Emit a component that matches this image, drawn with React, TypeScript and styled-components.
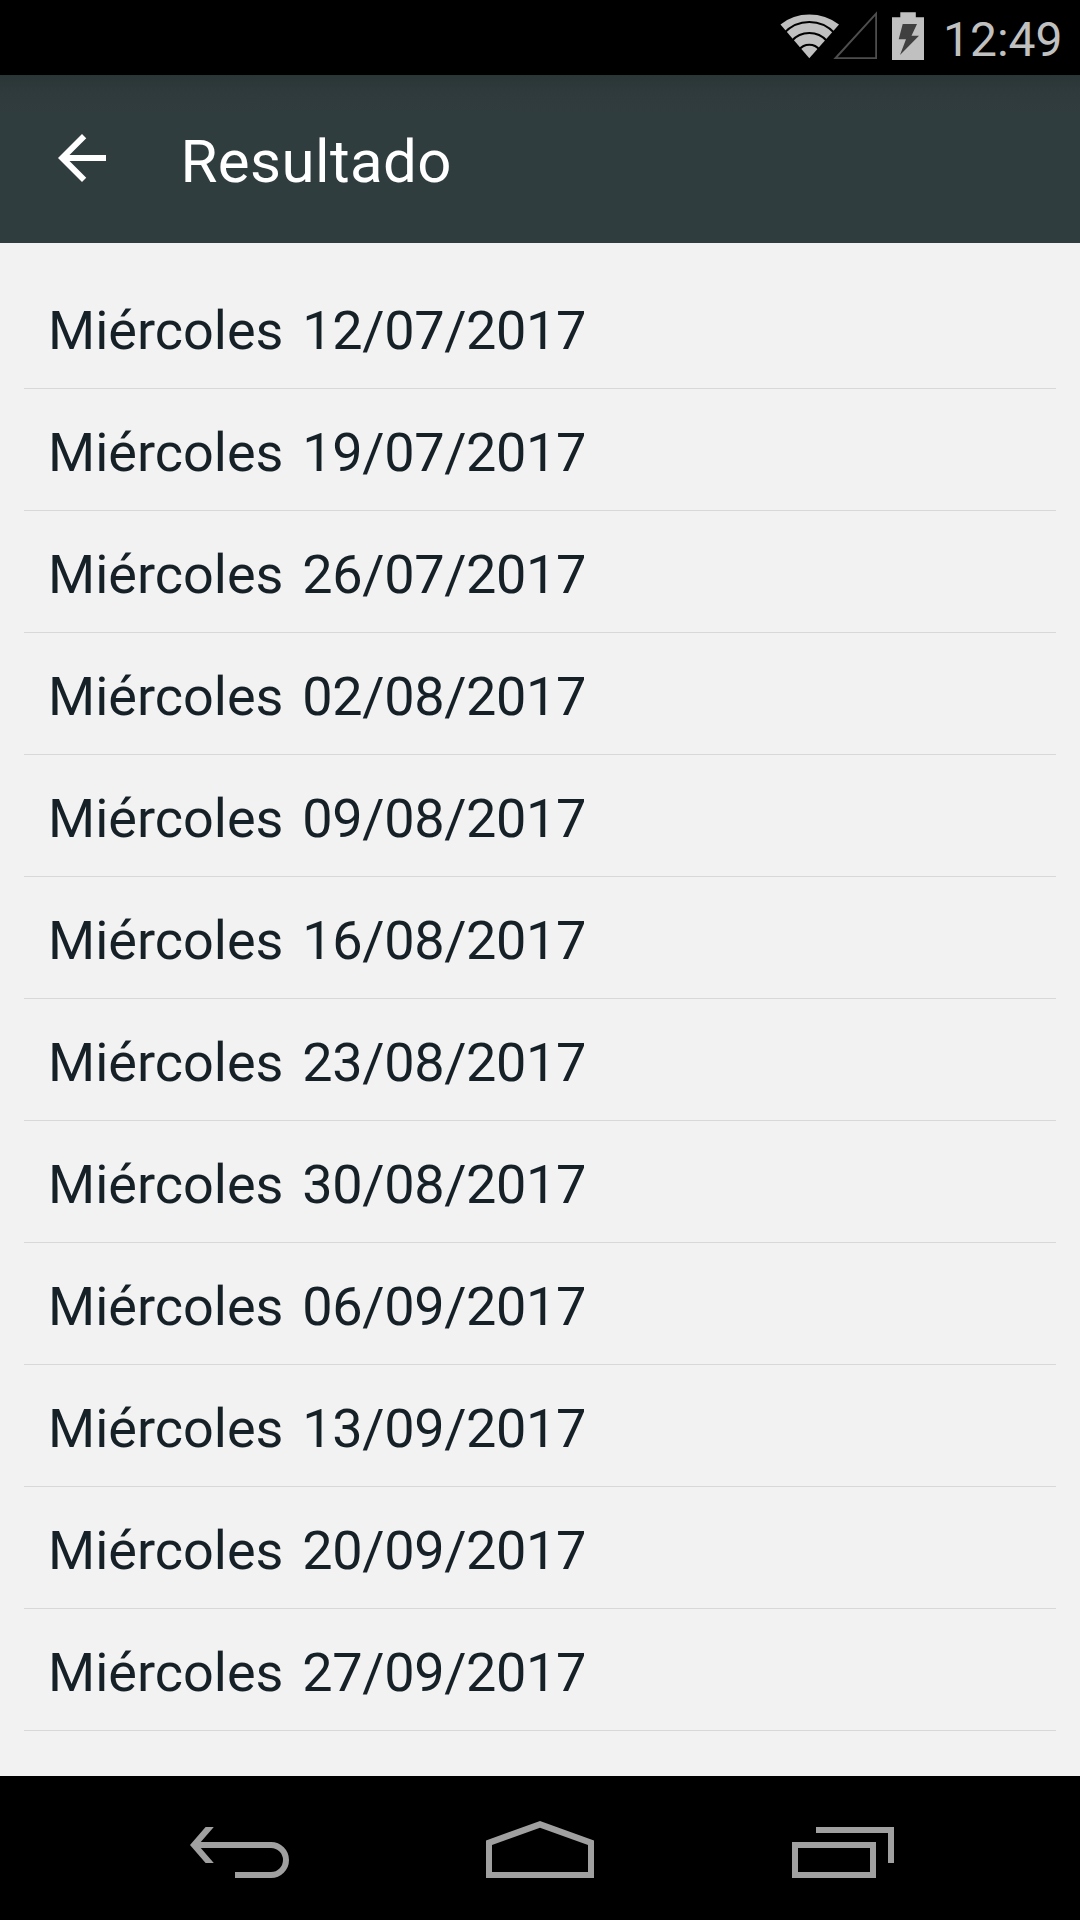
import React from "react";
import styled, { createGlobalStyle } from "styled-components";

const GlobalStyle = createGlobalStyle`
  body { margin: 0; background: #f2f2f2; }
  * { box-sizing: border-box; }
`;

const Screen = styled.div`
  width: 1080px;
  height: 1920px;
  display: flex;
  flex-direction: column;
  overflow: hidden;
  background: #f2f2f2;
  font-family: Roboto, "Noto Sans", sans-serif;
`;

const StatusBar = styled.div`
  flex: none;
  height: 75px;
  display: flex;
  justify-content: flex-end;
  align-items: flex-start;
  background: #000;
`;

const StatusIcons = styled.svg`
  width: 150px;
  height: 75px;
  flex: none;
`;

const Clock = styled.span`
  width: 155px;
  padding-left: 18px;
  line-height: 80px;
  height: 75px;
  font-size: 48px;
  color: #c0c0c0;
  white-space: nowrap;
`;

const AppBar = styled.header`
  flex: none;
  height: 168px;
  display: flex;
  align-items: flex-start;
  padding-left: 46px;
  background: linear-gradient(#2a3536 0, #2f3a3c 16px, #303d3e 42px);
`;

const BackButton = styled.button`
  width: 72px;
  height: 72px;
  margin: 47px 62.5px 0 0;
  padding: 0;
  border: 0;
  background: none;
  svg { display: block; width: 72px; height: 72px; fill: #fff; }
`;

const Title = styled.h1`
  margin: 0;
  height: 168px;
  line-height: 174px;
  font-size: 60px;
  font-weight: 400;
  letter-spacing: 0.4px;
  color: #fff;
`;

const DateList = styled.ul`
  flex: 1;
  margin: 0;
  padding: 24px 24px 0;
  list-style: none;
`;

const DateRow = styled.li`
  height: 122px;
  padding-left: 24px;
  border-bottom: 1px solid #d8d8d8;
  line-height: 128px;
  font-size: 54px;
  word-spacing: 5.5px;
  color: #162127;
  white-space: nowrap;
`;

const DateValue = styled.span`
  letter-spacing: -0.36px;
`;

const NavBar = styled.nav`
  flex: none;
  height: 144px;
  display: flex;
  gap: 196px;
  padding: 45px 0 0 190px;
  background: #000;
`;

const NavIcon = styled.svg<{ $width: number }>`
  width: ${(p) => p.$width}px;
  height: 57px;
  flex: none;
`;

const dates = [
  "12/07/2017", "19/07/2017", "26/07/2017", "02/08/2017",
  "09/08/2017", "16/08/2017", "23/08/2017", "30/08/2017",
  "06/09/2017", "13/09/2017", "20/09/2017", "27/09/2017",
];

export default function App() {
  return (
    <>
      <GlobalStyle />
      <Screen>
        <StatusBar>
          <StatusIcons viewBox="775 0 150 75">
            <path d="M809.3 58.3 L780.5 24.5 Q793 14.6 809.3 14.6 T839 24.5 Z" fill="#c0c0c0" />
            <g fill="none" stroke="#000" strokeWidth="2">
              <path d="M784 33.2 A34 34 0 0 1 834.6 33.2" />
              <path d="M791.6 41 A23.6 23.6 0 0 1 827 41" />
              <path d="M799 49.8 A13 13 0 0 1 819.6 49.8" />
            </g>
            <path d="M833.3 59 L877 11.3 V59 Z M837.7 57.2 H875.2 V16 Z" fill="#4d4d4d" fillRule="evenodd" />
            <path d="M892 17.3 H900.3 V12.2 H915.8 V17.3 H924 V60 H892 Z" fill="#c0c0c0" />
            <path d="M902.7 24 H917 L911.5 35.7 H919 L900 55 L906 39.3 H898.7 Z" fill="#404040" />
          </StatusIcons>
          <Clock>12:49</Clock>
        </StatusBar>
        <AppBar>
          <BackButton aria-label="Atrás">
            <svg viewBox="0 0 24 24">
              <path d="M20 11H7.83l5.59-5.59L12 4l-8 8 8 8 1.41-1.41L7.83 13H20v-2z" />
            </svg>
          </BackButton>
          <Title>Resultado</Title>
        </AppBar>
        <DateList>
          {dates.map((date) => (
            <DateRow key={date}>
              Miércoles <DateValue>{date}</DateValue>
            </DateRow>
          ))}
        </DateList>
        <NavBar>
          <NavIcon $width={100} viewBox="190 1821 100 57">
            <path d="M190 1845 L205.6 1827 H213.8 L198.2 1845 L213.8 1863 H205.6 Z" fill="#a0a0a0" />
            <path d="M197 1845 H271 A15 15 0 0 1 271 1875 H235" fill="none" stroke="#a0a0a0" strokeWidth="6" />
          </NavIcon>
          <NavIcon $width={110} viewBox="486 1821 110 57">
            <path
              d="M486 1840.5 L540 1821 L594 1840.5 V1878 H486 Z M492 1845 V1872 H588 V1845 L540 1827.7 Z"
              fill="#a0a0a0"
              fillRule="evenodd"
            />
          </NavIcon>
          <NavIcon $width={102} viewBox="792 1821 102 57">
            <path d="M795 1845 H873 V1875 H795 Z M816 1830 H891 V1863" fill="none" stroke="#a0a0a0" strokeWidth="6" />
          </NavIcon>
        </NavBar>
      </Screen>
    </>
  );
}
